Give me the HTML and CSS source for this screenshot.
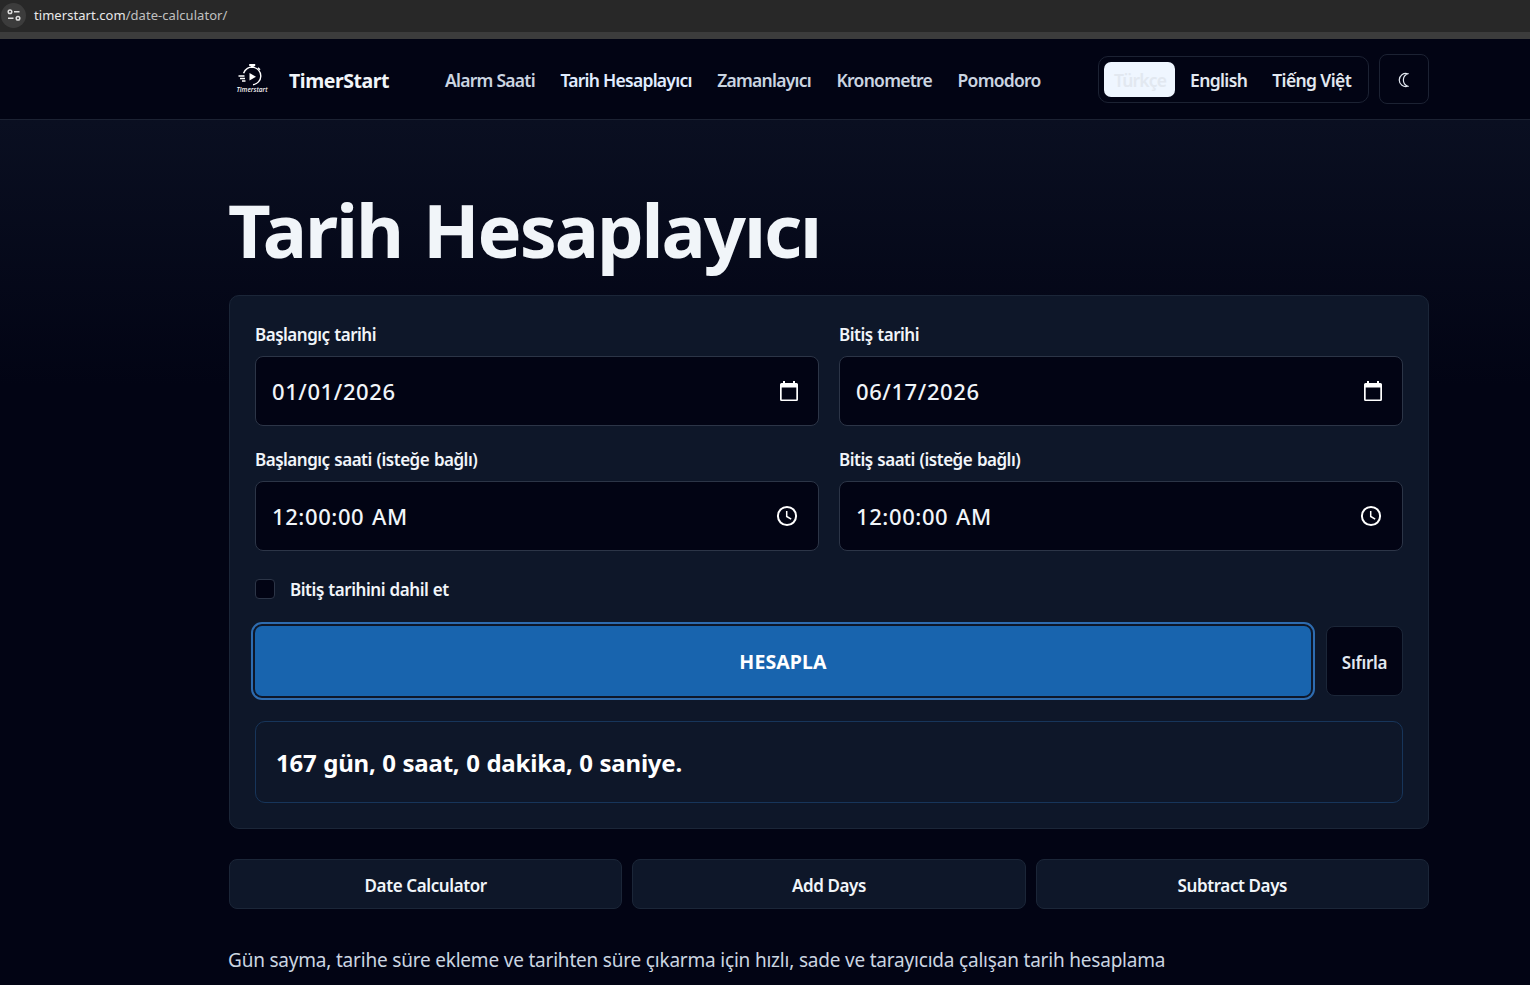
FILE: index.html
```
<!DOCTYPE html>
<html lang="tr">
<head>
    <meta charset="UTF-8">
    <meta name="viewport" content="width=device-width, initial-scale=1.0">
    <title>Tarih Hesaplayıcı</title>
    <link rel="stylesheet" href="styles.css">
</head>
<body>
    <div class="browser-bar">
        <span class="site-info">
            <svg width="14" height="12" viewBox="0 0 14 12" fill="none" stroke="#dedede" stroke-width="1.5">
                <circle cx="3" cy="2.8" r="1.8"/>
                <path d="M7 2.8h5.5M1 9.2h5.5"/>
                <circle cx="11" cy="9.2" r="1.8"/>
            </svg>
        </span>
        <span class="url">timerstart.com<span class="path">/date-calculator/</span></span>
    </div>

    <header class="site-header">
        <div class="container header-inner">
            <a class="brand">
                <svg class="logo" width="40" height="40" viewBox="0 0 40 40">
                    <g fill="none" stroke="#fff" stroke-width="1.4">
                        <path d="M11.600 14.300A8.800 8.800 0 1 1 21 25.700"/>
                        <path d="M6.500 17h6M8 19.500h5M10 22h3.500"/>
                        <path d="M26 8.800l2 2"/>
                    </g>
                    <path d="M17.200 5h6v1.900h-1.500v2h-3v-2h-1.500z" fill="#fff"/>
                    <path d="M17.500 14l6.500 3.800-6.500 3.800z" fill="#fff"/>
                    <text class="logo-text" x="4.500" y="32.500" textLength="31" lengthAdjust="spacingAndGlyphs">Timerstart</text>
                </svg>
                <span class="brand-name">TimerStart</span>
            </a>
            <nav class="nav">
                <a>Alarm Saati</a>
                <a class="active">Tarih Hesaplayıcı</a>
                <a>Zamanlayıcı</a>
                <a>Kronometre</a>
                <a>Pomodoro</a>
            </nav>
            <div class="tools">
                <div class="langs">
                    <a class="lang selected">Türkçe</a>
                    <a class="lang">English</a>
                    <a class="lang">Tiếng Việt</a>
                </div>
                <button class="theme-btn">
                    <svg width="12" height="16" viewBox="0 0 12 16" fill="none" stroke="#e2e8f0" stroke-width="1.200">
                        <path d="M10.800 1.700A6.600 6.600 0 1 0 10.800 14.300A6.700 6.700 0 0 1 10.800 1.700z"/>
                    </svg>
                </button>
            </div>
        </div>
    </header>

    <main class="container">
        <h1>Tarih Hesaplayıcı</h1>

        <section class="card">
            <div class="fields">
                <div class="field">
                    <label>Başlangıç tarihi</label>
                    <div class="input date">
                        <span>01/01/2026</span>
                        <svg width="20" height="20" viewBox="0 0 20 20">
                            <path d="M4 0h2v2h8V0h2v2h1.500A1.500 1.500 0 0 1 19 3.500v15a1.500 1.500 0 0 1-1.500 1.500h-15A1.500 1.500 0 0 1 1 18.500v-15A1.500 1.500 0 0 1 2.500 2H4zM2.700 6.500v12h14.600v-12z" fill="#fff" fill-rule="evenodd"/>
                        </svg>
                    </div>
                </div>
                <div class="field">
                    <label>Bitiş tarihi</label>
                    <div class="input date">
                        <span>06/17/2026</span>
                        <svg width="20" height="20" viewBox="0 0 20 20">
                            <path d="M4 0h2v2h8V0h2v2h1.500A1.500 1.500 0 0 1 19 3.500v15a1.500 1.500 0 0 1-1.500 1.500h-15A1.500 1.500 0 0 1 1 18.500v-15A1.500 1.500 0 0 1 2.500 2H4zM2.700 6.500v12h14.600v-12z" fill="#fff" fill-rule="evenodd"/>
                        </svg>
                    </div>
                </div>
                <div class="field">
                    <label>Başlangıç saati (isteğe bağlı)</label>
                    <div class="input time">
                        <span>12:00:00 AM</span>
                        <svg width="22" height="22" viewBox="0 0 22 22" fill="none" stroke="#fff">
                            <circle cx="11" cy="11" r="9.100" stroke-width="2"/>
                            <path d="M10.700 6v5.500l4.500 2.700" stroke-width="1.500"/>
                        </svg>
                    </div>
                </div>
                <div class="field">
                    <label>Bitiş saati (isteğe bağlı)</label>
                    <div class="input time">
                        <span>12:00:00 AM</span>
                        <svg width="22" height="22" viewBox="0 0 22 22" fill="none" stroke="#fff">
                            <circle cx="11" cy="11" r="9.100" stroke-width="2"/>
                            <path d="M10.700 6v5.500l4.500 2.700" stroke-width="1.500"/>
                        </svg>
                    </div>
                </div>
            </div>

            <label class="check">
                <span class="box"></span>
                <span class="check-text">Bitiş tarihini dahil et</span>
            </label>

            <div class="actions">
                <button class="btn-primary">HESAPLA</button>
                <button class="btn-reset">Sıfırla</button>
            </div>

            <div class="result">167 gün, 0 saat, 0 dakika, 0 saniye.</div>
        </section>

        <div class="tabs">
            <a class="tab">Date Calculator</a>
            <a class="tab">Add Days</a>
            <a class="tab">Subtract Days</a>
        </div>

        <p class="intro">Gün sayma, tarihe süre ekleme ve tarihten süre çıkarma için hızlı, sade ve tarayıcıda çalışan tarih hesaplama</p>
    </main>
</body>
</html>
```

FILE: styles.css
```
* {
    box-sizing: border-box;
}

/* the page fades from navy into near black */
body {
    margin: 0;
    height: 985px;
    overflow: hidden;
    display: flex;
    flex-direction: column;
    background: #020414 linear-gradient(#0a0f21 120px, #020414 385px);
    color: #f1f5f9;
    font-family: "Noto Sans", "Open Sans", sans-serif;
}

button {
    font-family: inherit;
    padding: 0;
}

a, label, button {
    white-space: nowrap;
}

.container {
    width: 1200px;
    margin-left: 229px;
}

/* address bar */
.browser-bar {
    flex: none;
    height: 39px;
    padding: 0 0 2px 1px;
    background-color: #282828;
    border-bottom: 7px solid #3c3c3c;
    display: flex;
    align-items: center;
    gap: 8px;
}

.site-info {
    width: 25px;
    height: 25px;
    border-radius: 50%;
    background-color: #3c3c3c;
    display: flex;
    align-items: center;
    justify-content: center;
}

.url {
    font-size: 13px;
    line-height: 30px;
    letter-spacing: 0.05px;
    color: #e8e8e8;
}

.path {
    color: #c0c0c0;
}

/* header */
.site-header {
    flex: none;
    height: 81px;
    background-color: #020414;
    border-bottom: 1px solid #1c2233;
}

.header-inner {
    height: 80px;
    display: flex;
    align-items: center;
}

.brand {
    display: flex;
    align-items: center;
    gap: 17px;
    width: 216px;
    padding-left: 3px;
}

.logo-text {
    fill: #fff;
    font-size: 6.5px;
    font-weight: 500;
    font-style: italic;
}

.brand-name {
    padding-top: 3px;
    font-size: 19.5px;
    font-weight: 700;
    letter-spacing: -0.45px;
}

.nav {
    display: flex;
    gap: 25.5px;
    padding-top: 1px;
    font-size: 17.5px;
    font-weight: 600;
    letter-spacing: -0.74px;
    color: #cbd5e1;
}

.nav .active {
    color: #e0ecff;
}

.tools {
    display: flex;
    align-items: center;
    gap: 10px;
    margin-left: auto;
}

.langs {
    width: 271px;
    height: 47px;
    padding: 5px;
    border: 1px solid #1c2233;
    border-radius: 10px;
    display: flex;
    align-items: center;
    gap: 5px;
}

.lang {
    height: 35px;
    padding: 0 10px;
    border-radius: 7px;
    font-size: 17.5px;
    line-height: 36px;
    font-weight: 600;
    letter-spacing: -0.62px;
    color: #e2e8f0;
}

.lang.selected {
    width: 71px;
    background-color: #eff6ff;
    letter-spacing: -0.85px;
}

.theme-btn {
    width: 50px;
    height: 50px;
    padding: 2px 2px 0 0;
    border: 1px solid #1c2233;
    border-radius: 8px;
    background-color: #020414;
    display: flex;
    align-items: center;
    justify-content: center;
}

h1 {
    margin: 0;
    height: 175px;
    padding-top: 61px;
    font-size: 74px;
    line-height: 98px;
    font-weight: 700;
    letter-spacing: -2.1px;
    word-spacing: 4px;
    text-indent: -1px;
    white-space: nowrap;
}

.card {
    height: 534px;
    padding: 25px;
    border: 1px solid #1b2638;
    border-radius: 10px;
    background-color: #0e1729;
}

.fields {
    display: grid;
    grid-template-columns: 1fr 1fr;
    gap: 20px;
}

.field label {
    display: block;
    height: 35px;
    line-height: 27px;
    font-size: 17px;
    font-weight: 600;
    letter-spacing: -0.5px;
    word-spacing: 0.8px;
}

.input {
    height: 70px;
    padding: 0 19px 0 16px;
    border: 1px solid #2c3547;
    border-radius: 8px;
    background-color: #020414;
    display: flex;
    align-items: center;
    justify-content: space-between;
    font-size: 22px;
    font-weight: 500;
    letter-spacing: 0.6px;
}

.time {
    padding: 0 20px 0 16px;
    word-spacing: 1.5px;
}

.check {
    height: 75px;
    display: flex;
    align-items: center;
    gap: 15px;
    font-size: 17px;
    font-weight: 600;
    letter-spacing: -0.45px;
    word-spacing: 0.5px;
}

.check-text {
    padding-top: 2px;
}

.box {
    width: 20px;
    height: 20px;
    border: 1px solid #2c3547;
    border-radius: 4px;
    background-color: #020414;
}

.actions {
    display: flex;
    gap: 15px;
}

.btn-primary {
    flex: 1;
    height: 70px;
    border: 0;
    border-radius: 7px;
    background-color: #1864ae;
    outline: 2px solid #2e6cb0;
    outline-offset: 2px;
    color: #fff;
    font-size: 19.5px;
    font-weight: 700;
    letter-spacing: 0.1px;
}

.btn-reset {
    width: 77px;
    height: 70px;
    padding-top: 2px;
    border: 1px solid #1b2638;
    border-radius: 8px;
    background-color: #020414;
    color: #e2e8f0;
    font-size: 17px;
    font-weight: 600;
    letter-spacing: -0.3px;
}

.result {
    height: 82px;
    margin-top: 25px;
    padding-left: 20px;
    border: 1px solid #17355a;
    border-radius: 10px;
    line-height: 81px;
    font-size: 24px;
    font-weight: 700;
    letter-spacing: -0.22px;
    word-spacing: 0.7px;
    color: #fff;
    white-space: nowrap;
}

.tabs {
    display: grid;
    grid-template-columns: repeat(3, 1fr);
    gap: 10px;
    margin-top: 30px;
}

.tab {
    height: 50px;
    border: 1px solid #1b2638;
    border-radius: 8px;
    background-color: #0e1729;
    text-align: center;
    line-height: 51px;
    font-size: 17px;
    font-weight: 600;
    letter-spacing: -0.4px;
}

.intro {
    margin: 36px 0 0;
    font-size: 19px;
    line-height: 30px;
    letter-spacing: -0.2px;
    text-indent: -1px;
    color: #cbd5e1;
    white-space: nowrap;
}
```
